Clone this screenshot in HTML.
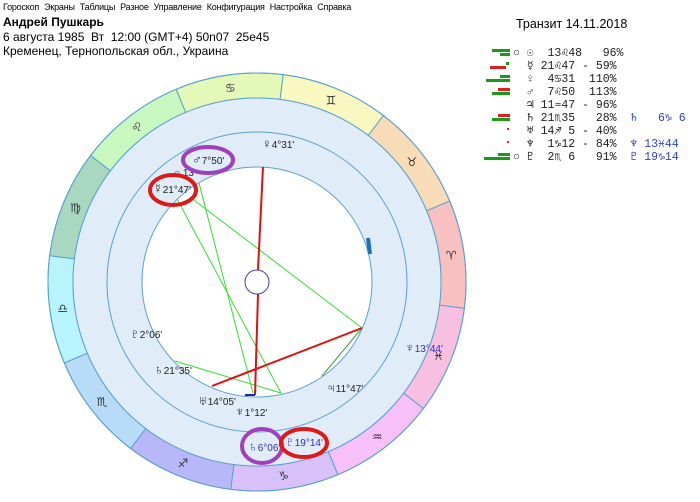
<!DOCTYPE html>
<html><head><meta charset="utf-8"><style>
body{margin:0;width:700px;height:502px;background:#fff;position:relative;overflow:hidden;font-family:"Liberation Sans","DejaVu Sans",sans-serif;}
.menu{position:absolute;top:2px;left:3px;font-size:9px;color:#000;white-space:nowrap;letter-spacing:-0.2px}
.menu span{margin-right:5px}
.t{position:absolute;white-space:nowrap}
.row{position:absolute;left:513px;font-family:"Liberation Mono","DejaVu Sans Mono",monospace;font-size:11.5px;white-space:pre;color:#222}
.b{position:absolute;height:3px}
</style></head><body>
<div class="menu"><span>Гороскоп</span><span>Экраны</span><span>Таблицы</span><span>Разное</span><span>Управление</span><span>Конфигурация</span><span>Настройка</span><span>Справка</span></div>
<div class="t" style="left:3px;top:15px;font-size:12px;font-weight:bold">Андрей Пушкарь</div>
<div class="t" style="left:3px;top:30px;font-size:12px">6 августа 1985&nbsp; Вт&nbsp; 12:00 (GMT+4) 50n07&nbsp; 25e45</div>
<div class="t" style="left:3px;top:44px;font-size:12px">Кременец, Тернопольская обл., Украина</div>
<div class="t" style="left:516px;top:17px;font-size:12.5px">Транзит 14.11.2018</div>

<div class="row" style="top:45px">○ ☉  13♌48   96%</div>
<div class="row" style="top:58px">  ☿ 21♌47 - 59%</div>
<div class="row" style="top:71px">  ♀  4♋31  110%</div>
<div class="row" style="top:84px">  ♂  7♌50  113%</div>
<div class="row" style="top:97px">  ♃ 11♒47 - 96%</div>
<div class="row" style="top:110px">  ♄ 21♏35   28%  <span style="color:#3040d0">♄   6♑ 6</span></div>
<div class="row" style="top:123px">  ♅ 14♐ 5 - 40%</div>
<div class="row" style="top:136px">  ♆  1♑12 - 84%  <span style="color:#3040d0">♆ 13♓44</span></div>
<div class="row" style="top:149px">○ ♇  2♏ 6   91%  <span style="color:#3040d0">♇ 19♑14</span></div>
<div class="b" style="left:492px;top:49px;width:18px;background:#1a9a1a"></div><div class="b" style="left:500px;top:53px;width:10px;background:#1a9a1a"></div>
<div class="b" style="left:490px;top:66px;width:16px;background:#e02020"></div><div class="b" style="left:506px;top:62px;width:3px;background:#1a9a1a"></div>
<div class="b" style="left:486px;top:79px;width:24px;background:#1a9a1a"></div><div class="b" style="left:500px;top:75px;width:10px;background:#1a9a1a"></div>
<div class="b" style="left:492px;top:92px;width:18px;background:#1a9a1a"></div><div class="b" style="left:498px;top:88px;width:12px;background:#e02020"></div>
<div class="b" style="left:492px;top:118px;width:18px;background:#1a9a1a"></div><div class="b" style="left:498px;top:114px;width:12px;background:#e02020"></div>
<div class="b" style="left:507px;top:128px;width:2px;height:2px;background:#e02020"></div>
<div class="b" style="left:507px;top:141px;width:2px;height:2px;background:#e02020"></div>
<div class="b" style="left:484px;top:157px;width:26px;background:#1a9a1a"></div><div class="b" style="left:498px;top:153px;width:12px;background:#1a9a1a"></div>

<svg width="700" height="502" style="position:absolute;left:0;top:0" font-family="Liberation Sans, DejaVu Sans, sans-serif">
<g id="z"></g>
<circle cx="257" cy="282" r="184" fill="#e0ecf8" stroke="#5aa0d0"/>
<circle cx="257" cy="282" r="150" fill="#e0ecf8" stroke="#5aa0d0"/>
<circle cx="257" cy="282" r="115" fill="#fff" stroke="#5aa0d0"/>
<circle cx="257" cy="282" r="209" fill="none" stroke="#5aa0d0"/>
<g stroke="#30e030" stroke-width="1">
<line x1="177" y1="199" x2="281" y2="393"/><line x1="199" y1="183" x2="253" y2="393"/>
<line x1="190" y1="197" x2="362" y2="328"/><line x1="175" y1="361" x2="281" y2="393"/>
</g>
<line x1="362" y1="328" x2="322" y2="376" stroke="#40a040"/>
<g stroke="#e01010" stroke-width="2">
<line x1="263" y1="167" x2="258" y2="270"/><line x1="258" y1="294" x2="255" y2="395"/>
<line x1="212" y1="386" x2="362" y2="328"/></g>
<line x1="245" y1="395" x2="255" y2="395" stroke="#2020c0" stroke-width="2"/>
<line x1="368" y1="238" x2="370" y2="254" stroke="#1a70c0" stroke-width="4"/>
<circle cx="257" cy="282" r="12" fill="#fff" stroke="#4040b0"/>
<g font-size="10" fill="#222">
<text x="262" y="148"><tspan font-size="13">♀</tspan>4°31'</text>
<text x="192" y="164"><tspan font-size="13">♂</tspan>7°50'</text>
<text x="174" y="176">○ 13</text>
<text x="153" y="193"><tspan font-size="13">☿</tspan>21°47'</text>
<text x="130" y="338"><tspan font-size="13">♇</tspan>2°06'</text>
<text x="154" y="374"><tspan font-size="13">♄</tspan>21°35'</text>
<text x="198" y="405"><tspan font-size="13">♅</tspan>14°05'</text>
<text x="235" y="416"><tspan font-size="13">♆</tspan>1°12'</text>
<text x="326" y="392"><tspan font-size="13">♃</tspan>11°47'</text>
</g>
<g font-size="10" fill="#3030c0">
<text x="405" y="352"><tspan font-size="13">♆</tspan>13°44'</text>
<text x="248" y="451"><tspan font-size="13">♄</tspan>6°06'</text>
<text x="285" y="446"><tspan font-size="13">♇</tspan>19°14'</text>
</g>
<g fill="none" stroke-width="4">
<ellipse cx="208" cy="160" rx="25" ry="13" stroke="#a040c0"/>
<ellipse cx="173" cy="190" rx="23" ry="15" stroke="#e01818"/>
<ellipse cx="262" cy="446" rx="20" ry="17" stroke="#a040c0"/>
<ellipse cx="304" cy="443" rx="23" ry="14" stroke="#e01818"/>
</g>
</svg>
<script>
var g=document.getElementById('z'),cx=257,cy=282,R=209,r=184;
var cols=['#e4f8b8','#c8f8c0','#a8d8c0','#b8f4fc','#b8dcf8','#b8b8f8','#d8c0f8','#f8c0f8','#f8c0e0','#f8c0c0','#f8dcb8','#f8f8c0'];
var gl=['♋','♌','♍','♎','♏','♐','♑','♒','♓','♈','♉','♊'];
var s='';
function p(rr,a){return (cx+rr*Math.cos(a)).toFixed(1)+','+(cy-rr*Math.sin(a)).toFixed(1)}
for(var i=0;i<12;i++){var a1=(82.8+30*i)*Math.PI/180,a2=(112.8+30*i)*Math.PI/180;
s+='<path d="M'+p(R,a1)+' A'+R+','+R+' 0 0 0 '+p(R,a2)+' L'+p(r,a2)+' A'+r+','+r+' 0 0 1 '+p(r,a1)+'Z" fill="'+cols[i]+'" stroke="#5aa0d0"/>';
var am=(a1+a2)/2;s+='<text x="'+(cx+196*Math.cos(am))+'" y="'+(cy-196*Math.sin(am)+4)+'" font-size="12" text-anchor="middle" fill="#333">'+gl[i]+'</text>';}
g.innerHTML=s;
</script>
</body></html>
